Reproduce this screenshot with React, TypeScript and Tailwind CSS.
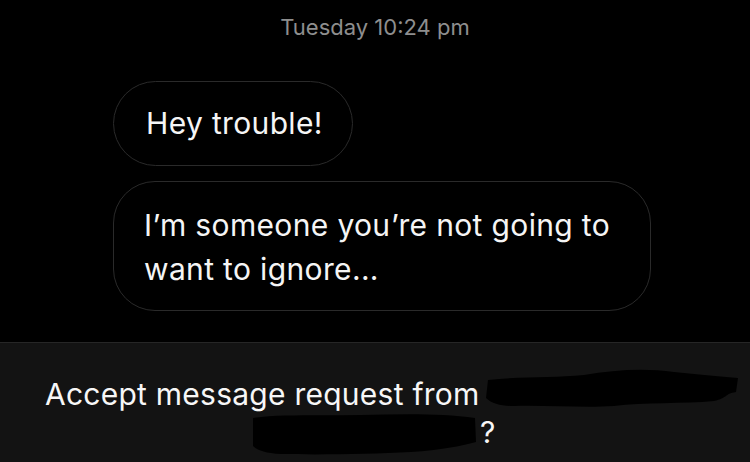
function Scribble({ w, h, d, className }: { w: number; h: number; d: string; className?: string }) {
  return (
    <svg width={w} height={h} viewBox={`0 0 ${w} ${h}`} className={`block shrink-0 ${className ?? ''}`}>
      <path d={d} fill="#000" />
    </svg>
  );
}

function Bubble({ children, className }: { children: React.ReactNode; className: string }) {
  return (
    <div className={`border-[1.5px] border-[#2a2a2a] bg-black text-[30px] tracking-[0.35px] text-[#f5f5f5] ${className}`}>
      {children}
    </div>
  );
}

export default function App() {
  return (
    <div className="flex h-[462px] w-[750px] flex-col overflow-hidden bg-black font-[Inter,sans-serif]">
      <div className="flex-1">
        <div className="pt-[14px] text-center text-[22px] leading-[26px] text-[#8e8e8e]">Tuesday 10:24 pm</div>
        <div className="mt-[41px] flex flex-col items-start gap-[15px] pl-[113px]">
          <Bubble className="flex h-[85px] w-[240px] items-center whitespace-nowrap rounded-full pl-[32px]">Hey trouble!</Bubble>
          <Bubble className="w-[538px] rounded-[42px] px-[30px] pb-[19px] pt-[21px] leading-[44px]">
            I’m someone you’re not going to
            <br />
            want to ignore...
          </Bubble>
        </div>
      </div>
      <div className="h-[120px] border-t border-[#262626] bg-[#131313] pt-[32px] text-[30px] leading-[38px] tracking-[0.25px] text-[#f7f7f7]">
        <div className="flex items-start pl-[45px]">
          <span>Accept message request from</span>
          <Scribble
            className="ml-[4px] mt-[-7px]"
            w={256}
            h={40}
            d="M4 12 C40 8 70 10 100 7 C130 2 160 0 190 4 C210 6 230 8 254 10 L252 24 C240 26 244 30 230 33 C200 36 160 34 130 38 C100 40 60 37 30 38 C18 38 8 36 2 30 Z"
          />
        </div>
        <div className="flex items-start pl-[251px]">
          <Scribble
            className="mt-[-1px]"
            w={226}
            h={43}
            d="M2 6 C30 2 70 4 110 3 C150 2 190 1 224 6 L225 30 C210 34 190 38 160 40 C120 42 70 43 30 42 C14 41 6 38 2 34 Z"
          />
          <span className="ml-[3px]">?</span>
        </div>
      </div>
    </div>
  );
}
